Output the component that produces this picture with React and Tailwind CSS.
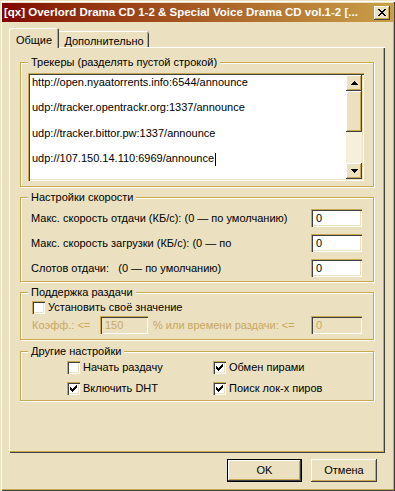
import React from 'react';

const raised =
  'shadow-[inset_-1px_-1px_0_#404040,inset_1px_1px_0_#ffffff,inset_-2px_-2px_0_#c8a850,inset_2px_2px_0_#ebe0c0]';
const sunken =
  'shadow-[inset_1px_1px_0_#c8a850,inset_2px_2px_0_#404040,inset_-1px_-1px_0_#ffffff,inset_-2px_-2px_0_#ebe0c0]';

const trackers = [
  'http://open.nyaatorrents.info:6544/announce',
  'udp://tracker.opentrackr.org:1337/announce',
  'udp://tracker.bittor.pw:1337/announce',
  'udp://107.150.14.110:6969/announce',
];

function Arrow({ down }) {
  const rows = down ? [7, 5, 3, 1] : [1, 3, 5, 7];
  return (
    <svg width="7" height="4" viewBox="0 0 7 4" shapeRendering="crispEdges">
      {rows.map((w, i) => (
        <rect key={i} x={(7 - w) / 2} y={i} width={w} height="1" fill="#000" />
      ))}
    </svg>
  );
}

function Check({ checked }) {
  // classic 7x7 tick, row by row
  const tick = [
    [6, 1], [5, 2], [0, 1, 4, 3], [0, 2, 3, 3], [0, 5], [1, 3], [2, 1],
  ];
  return (
    <span className={`flex h-[13px] w-[13px] shrink-0 items-center justify-center bg-white ${sunken}`}>
      {checked && (
        <svg width="7" height="7" viewBox="0 0 7 7" shapeRendering="crispEdges">
          {tick.map((r, y) =>
            r.length === 2 ? (
              <rect key={y} x={r[0]} y={y} width={r[1]} height="1" fill="#000" />
            ) : (
              <g key={y}>
                <rect x={r[0]} y={y} width={r[1]} height="1" fill="#000" />
                <rect x={r[2]} y={y} width={r[3]} height="1" fill="#000" />
              </g>
            )
          )}
        </svg>
      )}
    </span>
  );
}

function CheckRow({ checked, label }) {
  return (
    <div className="flex h-[13px] items-center gap-[3px]">
      <Check checked={checked} />
      <span className="leading-[13px]">{label}</span>
    </div>
  );
}

function Group({ title, className, children }) {
  return (
    <fieldset
      className={`w-[354px] border border-[#c8a850] pl-[7px] shadow-[inset_1px_1px_0_#ffffff,1px_1px_0_#ffffff] ${className}`}
    >
      <legend className="bg-[#ebe0c0] px-[3px] leading-[13px]">{title}</legend>
      {children}
    </fieldset>
  );
}

function Field({ value, disabled, className }) {
  return (
    <div
      className={`flex h-[18px] items-center pl-[5px] ${sunken} ${
        disabled ? 'bg-[#ebe0c0] text-[#c8a860]' : 'bg-white'
      } ${className}`}
    >
      {value}
    </div>
  );
}

export default function App() {
  return (
    <div className="flex h-[491px] w-[395px] flex-col bg-[#ebe0c0] p-[2px] font-['Liberation_Sans',Arial,sans-serif] text-[11px] text-black shadow-[inset_1px_1px_0_#ebe0c0,inset_2px_2px_0_#ffffff,inset_-1px_-1px_0_#404040,inset_-2px_-2px_0_#c8a850]">
      {/* Title bar */}
      <div className="mt-[1px] flex h-[19px] items-center justify-between bg-linear-to-r from-[#800000] to-[#c8a048] pl-[2px] pr-[3px]">
        <span className="whitespace-nowrap text-[11.5px] font-bold text-white">
          [qx] Overlord Drama CD 1-2 &amp; Special Voice Drama CD vol.1-2 [...
        </span>
        <div className={`flex h-[14px] w-[16px] items-center justify-center bg-[#ebe0c0] ${raised}`}>
          <svg width="8" height="7" viewBox="0 0 8 7" shapeRendering="crispEdges">
            <path d="M0 0h2v1h-2zM6 0h2v1h-2zM1 1h2v1h-2zM5 1h2v1h-2zM2 2h4v1h-4zM3 3h2v1h-2zM2 4h4v1h-4zM1 5h2v1h-2zM5 5h2v1h-2zM0 6h2v1h-2zM6 6h2v1h-2z" fill="#000" />
          </svg>
        </div>
      </div>

      <div className="ml-[7px] mt-[6px] flex w-[376px] flex-col">
        {/* Tabs */}
        <div className="flex h-[19px] items-end">
          <div className="relative z-10 -mb-[1px] flex h-[20px] w-[50px] justify-center rounded-t-[2px] bg-[#ebe0c0] pt-[4px] shadow-[inset_1px_1px_0_#ffffff,inset_-1px_0_0_#404040,inset_-2px_0_0_#c8a850]">
            Общие
          </div>
          <div className="flex h-[16px] w-[90px] justify-center rounded-tr-[2px] pt-[2px] shadow-[inset_0_1px_0_#ffffff,inset_-1px_0_0_#404040,inset_-2px_0_0_#c8a850]">
            Дополнительно
          </div>
        </div>

        {/* Tab panel */}
        <div className="flex h-[406px] flex-col pl-[11px] pt-[9px] shadow-[inset_1px_1px_0_#ffffff,inset_-1px_-1px_0_#404040,inset_-2px_-2px_0_#c8a850]">
          <Group title="Трекеры (разделять пустой строкой)" className="pb-[5px] pr-[7px] pt-[4px]">
            <div className={`flex h-[108px] w-[336px] bg-white p-[2px] ${sunken}`}>
              <div className="flex-1 overflow-hidden pl-[2px] pt-[1px]">
                {trackers.map((t, i) => (
                  <div key={t} className="h-[25.33px] leading-[12.67px]">
                    {t}
                    {i === trackers.length - 1 && (
                      <span className="ml-px inline-block h-[13px] w-px bg-black align-middle" />
                    )}
                  </div>
                ))}
              </div>
              <div className="flex w-[16px] flex-col">
                <div className={`flex h-[16px] items-center justify-center bg-[#ebe0c0] ${raised}`}>
                  <Arrow />
                </div>
                <div className={`h-[41px] bg-[#ebe0c0] ${raised}`} />
                <div className="flex-1 bg-[#f5efdc]" />
                <div className={`flex h-[16px] items-center justify-center bg-[#ebe0c0] ${raised}`}>
                  <Arrow down />
                </div>
              </div>
            </div>
          </Group>

          <Group title="Настройки скорости" className="mt-[4px] pb-[4px] pr-[11px] pt-[5px]">
            <div className="flex flex-col gap-[7px]">
              <div className="flex h-[18px] items-center justify-between pl-[3px]">
                <span>Макс. скорость отдачи (КБ/с): (0 — по умолчанию)</span>
                <Field value="0" className="w-[51px]" />
              </div>
              <div className="flex h-[18px] items-center justify-between pl-[3px]">
                <span>Макс. скорость загрузки (КБ/с): (0 — по</span>
                <Field value="0" className="w-[51px]" />
              </div>
              <div className="flex h-[18px] items-center justify-between pl-[3px]">
                <span className="whitespace-pre">Слотов отдачи:   (0 — по умолчанию)</span>
                <Field value="0" className="w-[51px]" />
              </div>
            </div>
          </Group>

          <Group title="Поддержка раздачи" className="mt-[4px] pb-[5px] pr-[11px] pt-[2px]">
            <div className="pl-[4px]">
              <CheckRow label="Установить своё значение" />
            </div>
            <div className="mt-[2px] flex h-[18px] items-center pl-[4px] text-[#c8a860]">
              <span className="w-[68px]">Коэфф.: &lt;=</span>
              <Field value="150" disabled className="w-[48px]" />
              <span className="ml-[5px]">% или времени раздачи: &lt;=</span>
              <Field value="0" disabled className="ml-auto w-[51px]" />
            </div>
          </Group>

          <Group title="Другие настройки" className="mt-[5px] pb-[5px] pr-[11px] pt-[3px]">
            <div className="grid grid-cols-[146px_1fr] gap-y-[8px] pl-[39px]">
              <CheckRow label="Начать раздачу" />
              <CheckRow checked label="Обмен пирами" />
              <CheckRow checked label="Включить DHT" />
              <CheckRow checked label="Поиск лок-х пиров" />
            </div>
          </Group>
        </div>

        {/* Buttons */}
        <div className="mt-[6px] flex justify-end gap-[9px] pr-[8px]">
          <div className="flex h-[23px] w-[75px] border border-black">
            <div className={`flex flex-1 items-center justify-center bg-[#ebe0c0] ${raised}`}>OK</div>
          </div>
          <div className={`flex h-[23px] w-[66px] items-center justify-center bg-[#ebe0c0] ${raised}`}>
            Отмена
          </div>
        </div>
      </div>
    </div>
  );
}
